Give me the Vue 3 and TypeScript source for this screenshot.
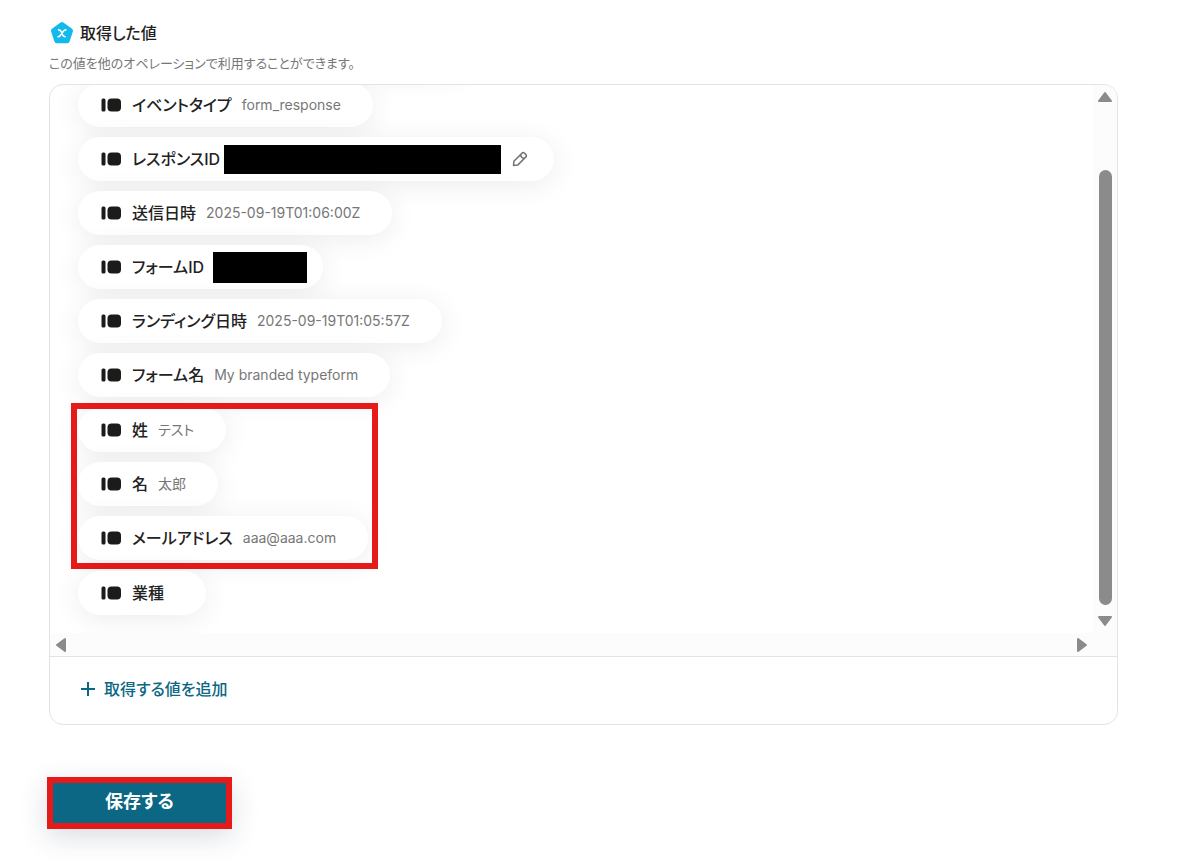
<script setup lang="ts">
interface Field {
  label: string
  value?: string
  masked?: 'long' | 'short'
  editable?: boolean
}

interface FieldGroup {
  highlighted: boolean
  fields: Field[]
}

const groups: FieldGroup[] = [
  {
    highlighted: false,
    fields: [
      { label: 'イベントタイプ', value: 'form_response' },
      { label: 'レスポンスID', masked: 'long', editable: true },
      { label: '送信日時', value: '2025-09-19T01:06:00Z' },
      { label: 'フォームID', masked: 'short' },
      { label: 'ランディング日時', value: '2025-09-19T01:05:57Z' },
      { label: 'フォーム名', value: 'My branded typeform' },
    ],
  },
  {
    highlighted: true,
    fields: [
      { label: '姓', value: 'テスト' },
      { label: '名', value: '太郎' },
      { label: 'メールアドレス', value: 'aaa@aaa.com' },
    ],
  },
  { highlighted: false, fields: [{ label: '業種' }] },
]
</script>

<template>
  <main class="page">
    <header class="heading">
      <svg class="badge" viewBox="0 0 24 24" aria-hidden="true">
        <path d="M10.6 1.5a2.4 2.4 0 0 1 2.8 0l8.6 6.2a2.4 2.4 0 0 1 .9 2.7l-3.3 10.2a2.4 2.4 0 0 1-2.3 1.6H6.7a2.4 2.4 0 0 1-2.3-1.600L1.1 10.400a2.4 2.4 0 0 1 .9-2.7z" fill="#12b9ec" />
        <path d="M8.600 8.900c1.300 0 1.900.4 2.400 1.500l1.800 3.800c.5 1.100 1 1.500 2.400 1.500M15.800 8.900c-1.100 0-1.700.4-2.300 1.200l-3.200 4.400c-.6.8-1.100 1.200-2.300 1.200" fill="none" stroke="#fff" stroke-width="1.600" stroke-linecap="round" />
      </svg>
      <h1>取得した値</h1>
    </header>
    <p class="note">この値を他のオペレーションで利用することができます。</p>

    <section class="panel">
      <div class="scroller">
        <div class="viewport">
          <div class="list">
            <div
              v-for="(group, g) in groups"
              :key="g"
              class="group"
              :class="{ highlighted: group.highlighted }"
            >
              <div v-for="field in group.fields" :key="field.label" class="pill">
                <svg class="type" viewBox="0 0 20 14" aria-hidden="true">
                  <rect x="0.500" y="0.500" width="4" height="13" rx="1.500" />
                  <rect x="6.500" y="0.500" width="13.500" height="13" rx="4" />
                </svg>
                <span class="label">{{ field.label }}</span>
                <span v-if="field.masked" class="mask" :class="field.masked"></span>
                <span v-else class="value">{{ field.value }}</span>
                <button v-if="field.editable" class="edit" type="button" aria-label="編集">
                  <svg viewBox="0 0 16 16" aria-hidden="true">
                    <path d="M1.500 14.500l.4-4.200 8.200-8.200a1.600 1.600 0 0 1 2.300 0l1.500 1.500a1.600 1.600 0 0 1 0 2.300l-8.200 8.200zM8.500 3.700c.3 2.300 1.500 3.500 3.800 3.800" fill="none" stroke="#747474" stroke-width="1.500" stroke-linejoin="round" />
                  </svg>
                </button>
              </div>
            </div>
          </div>
        </div>
        <div class="vbar">
          <svg class="arrow" viewBox="0 0 16 12" aria-hidden="true"><path d="M8 2L14 10H2z" /></svg>
          <div class="track"><div class="thumb"></div></div>
          <svg class="arrow" viewBox="0 0 16 12" aria-hidden="true"><path d="M8 10L2 2h12z" /></svg>
        </div>
        <div class="hbar">
          <svg class="arrow side" viewBox="0 0 12 16" aria-hidden="true"><path d="M2 8L10 2v12z" /></svg>
          <svg class="arrow side" viewBox="0 0 12 16" aria-hidden="true"><path d="M10 8L2 2v12z" /></svg>
        </div>
        <div class="corner"></div>
      </div>
      <footer class="foot">
        <button class="add" type="button">
          <svg viewBox="0 0 16 16" aria-hidden="true"><path d="M8 1v14M1 8h14" fill="none" stroke="#0b6783" stroke-width="2" /></svg>
          <span>取得する値を追加</span>
        </button>
      </footer>
    </section>

    <div class="save-frame">
      <button class="save" type="button">保存する</button>
    </div>
  </main>
</template>

<style>
body {
  background: #fff;
}
</style>

<style scoped>
.page {
  padding: 20px 80px 36px 49px;
  font-family: Inter, "Noto Sans CJK JP", sans-serif;
  font-feature-settings: "palt";
  color: #222;
}
button {
  font: inherit;
  font-feature-settings: inherit;
  border: 0;
  padding: 0;
  cursor: pointer;
}
.heading {
  display: flex;
  align-items: center;
  gap: 6px;
  height: 25px;
  padding-left: 1px;
}
.badge {
  width: 24px;
  height: 24px;
}
h1 {
  margin: 0;
  font-size: 16px;
  line-height: 24px;
  font-weight: 500;
}
.note {
  margin: 9px 0 12px;
  font-size: 13px;
  line-height: 18px;
  color: #777;
}
.panel {
  border: 1px solid #e3e3e3;
  border-radius: 14px;
  overflow: hidden;
}
.scroller {
  display: grid;
  grid-template-columns: 1fr 24px;
}
.viewport {
  overflow: hidden;
}
.list {
  display: flex;
  flex-direction: column;
  gap: 11px;
  margin-top: -57px;
  padding: 0 28px 18px;
}
.list::before {
  content: "";
  width: 388px;
  height: 44px;
  border-radius: 22px;
  box-shadow: 0 4px 28px rgba(0, 0, 0, 0.08);
}
.group {
  position: relative;
  display: flex;
  flex-direction: column;
  align-items: flex-start;
  gap: 10px;
}
.highlighted::after {
  content: "";
  position: absolute;
  top: -5px;
  left: -7px;
  width: 295px;
  height: 154px;
  border: 6px solid #e71a1a;
}
.pill {
  display: flex;
  align-items: center;
  height: 44px;
  padding: 0 32px 0 23px;
  border-radius: 22px;
  background: #fff;
  box-shadow: 0 4px 28px rgba(0, 0, 0, 0.08);
}
.type {
  width: 20px;
  height: 14px;
  margin-right: 11px;
  fill: #1b1b19;
}
.label {
  font-size: 16px;
  line-height: 24px;
  font-weight: 500;
}
.value {
  margin-left: 10px;
  font-size: 14px;
  line-height: 20px;
  color: #777;
}
.mask {
  background: #000;
}
.mask.long {
  width: 277px;
  height: 29px;
  margin-left: 4px;
}
.mask.short {
  width: 94px;
  height: 31px;
  margin: 0 -16px 0 9px;
}
.edit {
  display: flex;
  width: 16px;
  height: 16px;
  margin: 0 -6px 0 11px;
  background: none;
}
.edit svg {
  width: 16px;
  height: 16px;
}
.vbar {
  display: flex;
  flex-direction: column;
  align-items: center;
  padding: 6px 0;
  background: #fcfcfc;
}
.track {
  display: flex;
  flex: 1;
  align-items: flex-end;
  padding-bottom: 10px;
}
.thumb {
  width: 13px;
  height: 435px;
  border-radius: 7px;
  background: #8b8b8b;
}
.arrow {
  width: 16px;
  height: 12px;
  fill: #8b8b8b;
  stroke: #8b8b8b;
  stroke-width: 2;
  stroke-linejoin: round;
}
.arrow.side {
  width: 12px;
  height: 16px;
}
.hbar {
  display: flex;
  justify-content: space-between;
  align-items: center;
  height: 23px;
  padding: 0 5px;
  background: #fcfcfc;
}
.corner {
  background: #fcfcfc;
}
.foot {
  padding: 20px 30px 23px;
  border-top: 1px solid #e3e3e3;
}
.add {
  display: flex;
  align-items: center;
  gap: 8px;
  height: 24px;
  background: none;
  color: #0b6783;
  font-size: 16px;
  line-height: 24px;
  font-weight: 500;
}
.add svg {
  width: 16px;
  height: 16px;
}
.save-frame {
  display: inline-flex;
  margin: 52px 0 0 -2px;
  border: 6px solid #e71a1a;
  box-shadow: 0 8px 28px rgba(20, 50, 80, 0.16);
}
.save {
  width: 173px;
  height: 40px;
  padding-bottom: 2px;
  background: #0b6783;
  color: #fff;
  font-size: 18px;
  line-height: 24px;
  font-weight: 700;
}
</style>
